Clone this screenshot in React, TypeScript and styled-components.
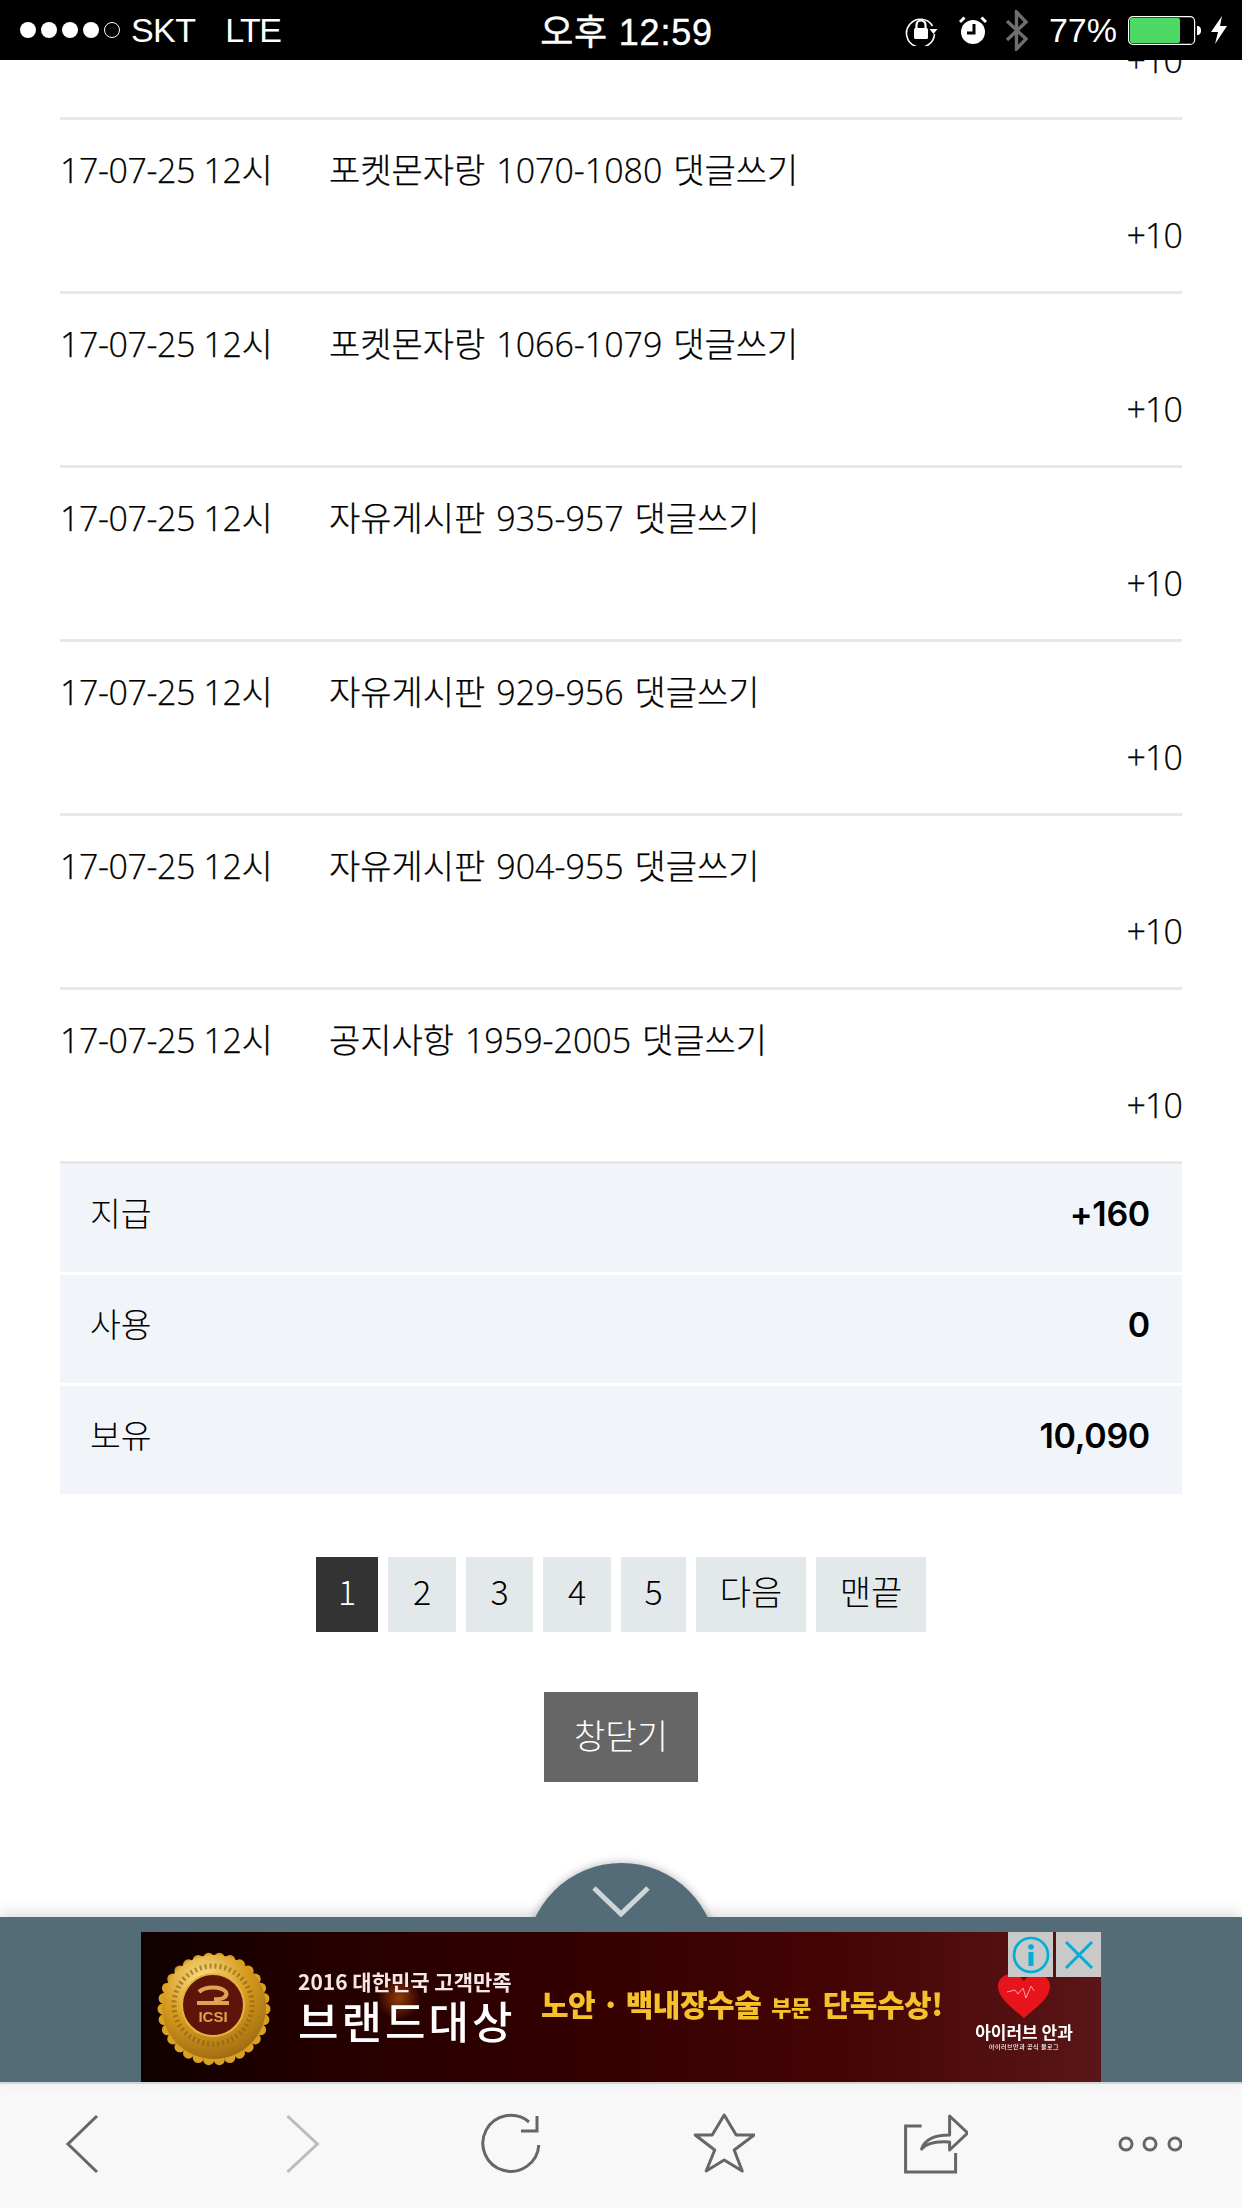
import React from "react";
import styled, { createGlobalStyle } from "styled-components";

const Global = createGlobalStyle`
  html, body { margin: 0; padding: 0; background: #fff; }
  * { box-sizing: border-box; }
`;

const KR = `"Noto Sans CJK KR", "Noto Sans", sans-serif`;
const BODY = `"Open Sans", "Noto Sans CJK KR", sans-serif`;

const Page = styled.div`
  width: 1242px;
  height: 2208px;
  display: flex;
  flex-direction: column;
  overflow: hidden;
  font-family: ${BODY};
  color: #000;
`;

/* status bar */
const StatusBar = styled.header`
  flex: none;
  height: 60px;
  background: #000;
  color: #fff;
  display: grid;
  grid-template-columns: 1fr auto 1fr;
  align-items: center;
  padding: 0 15px 0 20px;
  font-family: "Liberation Sans", "Noto Sans CJK KR", sans-serif;
  font-size: 34px;
`;
const StatusLeft = styled.div`
  display: flex;
  align-items: center;
  gap: 5px;
`;
const Dot = styled.span<{ $empty?: boolean }>`
  width: 16px;
  height: 16px;
  border-radius: 50%;
  background: ${(p) => (p.$empty ? "transparent" : "#fff")};
  border: ${(p) => (p.$empty ? "1px solid #fff" : "none")};
`;
const Carrier = styled.span<{ $ml: number; $ls: number }>`
  margin-left: ${(p) => p.$ml}px;
  letter-spacing: ${(p) => p.$ls}px;
`;
const Clock = styled.div`
  padding: 0 0 2px 6px;
  font-size: 36px;
  letter-spacing: 0.8px;
  -webkit-text-stroke: 0.4px #fff;
`;
const StatusRight = styled.div`
  display: flex;
  align-items: center;
  justify-content: flex-end;
`;
const StatusIcon = styled.svg<{ $ml?: number }>`
  display: block;
  flex: none;
  margin-left: ${(p) => p.$ml ?? 0}px;
`;
const Percent = styled.span`
  margin-left: 21px;
  margin-right: 11px;
`;

/* list */
const Main = styled.main`
  flex: 1;
  min-height: 0;
  padding: 0 60px;
  overflow: hidden;
`;
const Clipped = styled.div`
  height: 57px;
  overflow: hidden;
  display: flex;
  flex-direction: column;
  justify-content: flex-end;
  padding-bottom: 24px;
`;
const Line = styled.div`
  flex: none;
  height: 3px;
  background: #e8e8e8;
`;
const Row = styled.div`
  height: 174px;
  padding: 17px 0 0;
  border-bottom: 3px solid #e8e8e8;
`;
const RowTop = styled.div`
  display: flex;
  height: 62px;
  margin-bottom: 4px;
  align-items: center;
  font-size: 34px;
  font-weight: 300;
  -webkit-text-stroke: 0.25px #000;
`;
const DateCell = styled.span`
  width: 269px;
  flex: none;
  letter-spacing: -0.4px;
`;
const TitleCell = styled.span`
  word-spacing: 2px;
`;
const Amount = styled.div`
  flex: none;
  height: 65px;
  line-height: 65px;
  text-align: right;
  font-size: 34px;
  font-weight: 300;
  letter-spacing: -0.9px;
  -webkit-text-stroke: 0.25px #000;
`;

/* summary */
const Summary = styled.div`
  display: flex;
  flex-direction: column;
  gap: 3px;
`;
const SummaryRow = styled.div`
  height: 108px;
  padding: 0 32px 10px 30px;
  background: #f1f4f9;
  display: flex;
  align-items: center;
  justify-content: space-between;
  font-size: 33.5px;
  font-weight: 300;
`;
const SummaryLabel = styled.span`
  margin-bottom: 3px;
`;
const SummaryValue = styled.span`
  font-family: Inter, sans-serif;
  font-size: 34px;
  font-weight: 600;
  letter-spacing: -0.3px;
`;

/* pager */
const Pager = styled.nav`
  margin-top: 63px;
  display: flex;
  justify-content: center;
  gap: 10px;
`;
const PageButton = styled.button<{ $w: number; $active?: boolean }>`
  width: ${(p) => p.$w}px;
  height: 75px;
  padding: 0 0 8px;
  border: 0;
  background: ${(p) => (p.$active ? "#333" : "#e3e8eb")};
  color: ${(p) => (p.$active ? "#fff" : "#000")};
  font-family: ${KR};
  font-size: 34px;
  font-weight: 300;
`;
const CloseRow = styled.div`
  margin-top: 60px;
  display: flex;
  justify-content: center;
`;
const CloseButton = styled.button`
  width: 154px;
  height: 90px;
  padding: 0 0 6px;
  border: 0;
  background: #666;
  color: #fff;
  font-family: ${KR};
  font-size: 34px;
  font-weight: 300;
`;

/* ad dock */
const Dock = styled.div`
  flex: none;
  position: relative;
  height: 165px;
  box-shadow: 0 -4px 14px rgba(0, 0, 0, 0.14);
  font-family: ${KR};
`;
const DockTab = styled.button`
  position: absolute;
  left: 50%;
  top: -54px;
  width: 191px;
  height: 191px;
  margin-left: -95.5px;
  padding: 0;
  border: 0;
  border-radius: 50%;
  background: #546b78;
  box-shadow: 0 0 10px rgba(0, 0, 0, 0.3);
  z-index: 1;
  display: flex;
  justify-content: center;
  align-items: flex-start;
`;
const TabChevron = styled.svg`
  display: block;
  margin-top: 22px;
`;
const DockBar = styled.div`
  position: relative;
  z-index: 2;
  height: 165px;
  background: #546b78;
  padding-top: 15px;
  display: flex;
  justify-content: center;
  align-items: flex-start;
`;
const Banner = styled.div`
  position: relative;
  width: 960px;
  height: 150px;
  display: flex;
  align-items: flex-start;
  overflow: hidden;
  background:
    radial-gradient(circle at 258px 66px, rgba(230, 110, 20, 0.55) 0, rgba(230, 110, 20, 0) 22px),
    linear-gradient(90deg, #100000 0, #250000 20%, #330000 45%, #440404 72%, #5a1616 100%);
`;
const Medal = styled.svg`
  display: block;
  flex: none;
  margin: 20px 0 0 16px;
  filter: blur(0.5px);
`;
const AwardText = styled.div`
  flex: none;
  width: 222px;
  margin: 35px 0 0 27px;
  color: #fff;
  font-weight: 700;
  filter: blur(0.5px);
`;
const AwardSmall = styled.div`
  font-size: 21px;
  line-height: 28px;
  white-space: nowrap;
  color: #f6e6e6;
`;
const AwardBig = styled.div`
  font-size: 44px;
  line-height: 50px;
  white-space: nowrap;
  letter-spacing: 3px;
  font-weight: 500;
`;
const Claim = styled.div`
  flex: none;
  margin: 49px 0 0 21px;
  color: #f6c22c;
  font-size: 30px;
  line-height: 44px;
  font-weight: 900;
  letter-spacing: -0.5px;
  white-space: nowrap;
  filter: blur(0.5px);
`;
const ClaimSmall = styled.span`
  font-size: 22px;
  margin: 0 12px 0 10px;
`;
const Brand = styled.div`
  position: absolute;
  left: 830px;
  top: 42px;
  width: 106px;
  display: flex;
  flex-direction: column;
  align-items: center;
  color: #fff;
  filter: blur(0.4px);
`;
const BrandName = styled.div`
  margin-top: 5px;
  font-size: 17px;
  line-height: 18px;
  font-weight: 700;
  white-space: nowrap;
`;
const BrandSub = styled.div`
  margin-top: 2px;
  font-size: 6px;
  line-height: 7px;
  font-weight: 500;
  letter-spacing: 0.5px;
  white-space: nowrap;
`;
const AdControls = styled.div`
  position: absolute;
  top: 0;
  right: 0;
  display: flex;
  gap: 3px;
`;
const AdControl = styled.button`
  width: 45px;
  height: 45px;
  padding: 0;
  border: 0;
  background: #c9c9c9;
  display: flex;
  align-items: center;
  justify-content: center;
`;

/* browser toolbar */
const Toolbar = styled.footer`
  flex: none;
  height: 126px;
  background: #f8f8f8;
  border-top: 2px solid #d8dfe0;
  padding: 0 60px 4px 50px;
  display: flex;
  align-items: center;
  justify-content: space-between;
`;
const ToolIcon = styled.svg<{ $stroke?: string }>`
  display: block;
  width: 64px;
  height: 64px;
  fill: none;
  stroke-width: 3;
  stroke: ${(p) => p.$stroke ?? "#666"};
`;

const rows = [
  "포켓몬자랑 1070-1080 댓글쓰기",
  "포켓몬자랑 1066-1079 댓글쓰기",
  "자유게시판 935-957 댓글쓰기",
  "자유게시판 929-956 댓글쓰기",
  "자유게시판 904-955 댓글쓰기",
  "공지사항 1959-2005 댓글쓰기",
];
const summary = [
  ["지급", "+160"],
  ["사용", "0"],
  ["보유", "10,090"],
];
const pages: [string, number][] = [
  ["1", 62],
  ["2", 68],
  ["3", 67],
  ["4", 68],
  ["5", 65],
  ["다음", 110],
  ["맨끝", 110],
];

const scallops = Array.from({ length: 30 }, (_, i) => {
  const a = (i / 30) * Math.PI * 2;
  return { x: 57 + Math.cos(a) * 51, y: 57 + Math.sin(a) * 51 };
});

const MedalArt = () => (
  <Medal width="114" height="114" viewBox="0 0 114 114">
    <defs>
      <radialGradient id="gold" cx="40%" cy="25%" r="85%">
        <stop offset="0" stopColor="#fbe08a" />
        <stop offset="0.5" stopColor="#d59a1e" />
        <stop offset="1" stopColor="#94610e" />
      </radialGradient>
    </defs>
    {scallops.map((s, i) => (
      <circle key={i} cx={s.x} cy={s.y} r="5.5" fill="#d9a024" />
    ))}
    <circle cx="57" cy="55" r="52" fill="url(#gold)" />
    <circle cx="56" cy="53" r="39" fill="none" stroke="#8d6212" strokeWidth="5" strokeDasharray="2 3" opacity="0.7" />
    <circle cx="56" cy="53" r="31" fill="#5f1409" stroke="#e6b540" strokeWidth="2" />
    <path d="M42 40c6-6 22-6 27 0 2 5-4 8-12 7M40 51h32" fill="none" stroke="#dca451" strokeWidth="4" />
    <text x="56" y="70" textAnchor="middle" fontFamily="Liberation Sans, sans-serif" fontWeight="700" fontSize="15" fill="#dca451">
      ICSI
    </text>
  </Medal>
);

export default function App() {
  return (
    <Page>
      <Global />
      <StatusBar>
        <StatusLeft>
          <Dot />
          <Dot />
          <Dot />
          <Dot />
          <Dot $empty />
          <Carrier $ml={6} $ls={-0.6}>SKT</Carrier>
          <Carrier $ml={25} $ls={-1.6}>LTE</Carrier>
        </StatusLeft>
        <Clock>오후 12:59</Clock>
        <StatusRight>
          <StatusIcon width="33" height="32" viewBox="0 0 33 32">
            <path d="M27.5 12A14 14 0 1 0 29.5 20" fill="none" stroke="#fff" strokeWidth="1.6" />
            <path d="M24.5 15h8l-4 5z" fill="#fff" />
            <rect x="9" y="14" width="14" height="11" rx="1.5" fill="#fff" />
            <path d="M11.5 14v-3a4.5 4.5 0 0 1 9 0v3" fill="none" stroke="#fff" strokeWidth="2.2" />
          </StatusIcon>
          <StatusIcon $ml={21} width="28" height="28" viewBox="0 0 28 28">
            <circle cx="14" cy="16" r="12" fill="#fff" />
            <path d="M15 8v9H8" fill="none" stroke="#000" strokeWidth="3" />
            <path d="M1 6 5.5 1.5M27 6 22.5 1.5" stroke="#fff" strokeWidth="3" />
          </StatusIcon>
          <StatusIcon $ml={18} width="23" height="41" viewBox="0 0 23 41">
            <path d="M2 11 21 29 11.5 39V2L21 12 2 30" fill="none" stroke="#6e6e6e" strokeWidth="3.4" />
          </StatusIcon>
          <Percent>77%</Percent>
          <StatusIcon width="73" height="29" viewBox="0 0 73 29">
            <rect x="0.6" y="0.6" width="66" height="27.8" rx="4.5" fill="none" stroke="#fff" strokeWidth="1.2" />
            <rect x="2" y="2" width="50" height="25" rx="2" fill="#4cd964" />
            <path d="M69 10c3 0 4 2 4 4.500s-1 4.500-4 4.500z" fill="#fff" />
          </StatusIcon>
          <StatusIcon $ml={10} width="16" height="28" viewBox="0 0 16 28">
            <path d="M11 0 0 16h7L4 28 16 10H9z" fill="#fff" />
          </StatusIcon>
        </StatusRight>
      </StatusBar>

      <Main>
        <Clipped>
          <Amount>+10</Amount>
        </Clipped>
        <Line />
        {rows.map((title) => (
          <Row key={title}>
            <RowTop>
              <DateCell>17-07-25 12시</DateCell>
              <TitleCell>{title}</TitleCell>
            </RowTop>
            <Amount>+10</Amount>
          </Row>
        ))}
        <Summary>
          {summary.map(([label, value]) => (
            <SummaryRow key={label}>
              <SummaryLabel>{label}</SummaryLabel>
              <SummaryValue>{value}</SummaryValue>
            </SummaryRow>
          ))}
        </Summary>
        <Pager>
          {pages.map(([label, w], i) => (
            <PageButton key={label} $w={w} $active={i === 0}>
              {label}
            </PageButton>
          ))}
        </Pager>
        <CloseRow>
          <CloseButton>창닫기</CloseButton>
        </CloseRow>
      </Main>

      <Dock>
        <DockTab aria-label="접기">
          <TabChevron width="60" height="32" viewBox="0 0 60 32">
            <path d="M3 3 30 29 57 3" fill="none" stroke="#cfd6da" strokeWidth="5" />
          </TabChevron>
        </DockTab>
        <DockBar>
          <Banner>
            <MedalArt />
            <AwardText>
              <AwardSmall>2016 대한민국 고객만족</AwardSmall>
              <AwardBig>브랜드대상</AwardBig>
            </AwardText>
            <Claim>
              노안 · 백내장수술<ClaimSmall>부문</ClaimSmall>단독수상!
            </Claim>
            <Brand>
              <svg width="54" height="44" viewBox="0 0 54 44">
                <path d="M27 44C14 33 1 24 1 12 1 5 7 0 14 0c6 0 10 3 13 7 3-4 7-7 13-7 7 0 13 5 13 12 0 12-13 21-26 32z" fill="#e8141c" />
                <path d="M10 18l8-2 3 4 5-6 3 10 5-12 3 5" fill="none" stroke="#f7a7a7" strokeWidth="1" />
              </svg>
              <BrandName>아이러브 안과</BrandName>
              <BrandSub>아이러브안과 공식 블로그</BrandSub>
            </Brand>
            <AdControls>
              <AdControl aria-label="정보">
                <svg width="38" height="38" viewBox="0 0 38 38">
                  <circle cx="19" cy="19" r="17" fill="none" stroke="#00aed6" strokeWidth="2.6" />
                  <circle cx="19" cy="11" r="2.8" fill="#00aed6" />
                  <rect x="16.500" y="16" width="5" height="14" fill="#00aed6" />
                </svg>
              </AdControl>
              <AdControl aria-label="닫기">
                <svg width="30" height="30" viewBox="0 0 30 30">
                  <path d="M2 2 28 28M28 2 2 28" fill="none" stroke="#00aed6" strokeWidth="3" />
                </svg>
              </AdControl>
            </AdControls>
          </Banner>
        </DockBar>
      </Dock>

      <Toolbar>
        <ToolIcon viewBox="0 0 64 64">
          <path d="M47 4 18 32 47 60" />
        </ToolIcon>
        <ToolIcon viewBox="0 0 64 64" $stroke="#bbb">
          <path d="M23.400 4 53.400 32 23.400 60" />
        </ToolIcon>
        <ToolIcon viewBox="0 0 64 64">
          <path d="M52 10A28 28 0 1 0 61.800 33" />
          <path d="M60 4V19H44" />
        </ToolIcon>
        <ToolIcon viewBox="0 0 64 64">
          <path transform="translate(1.200 0)" d="M32 3 44 23H62L42 38 50 59 32 48 14 59 22.500 38 3 23H20Z" strokeLinejoin="round" />
        </ToolIcon>
        <ToolIcon viewBox="0 0 64 64">
          <path transform="translate(0.600 0)" d="M17 14H1V60H51V41" />
          <path transform="translate(0.600 0)" d="M17 37C20 28 30 23 45 23V4L63 21 45 38V30C32 29 22 31 17 37Z" strokeLinejoin="round" />
        </ToolIcon>
        <ToolIcon viewBox="0 0 64 64">
          <circle cx="8" cy="32" r="6" />
          <circle cx="32" cy="32" r="6" />
          <circle cx="57" cy="32" r="6" />
        </ToolIcon>
      </Toolbar>
    </Page>
  );
}
